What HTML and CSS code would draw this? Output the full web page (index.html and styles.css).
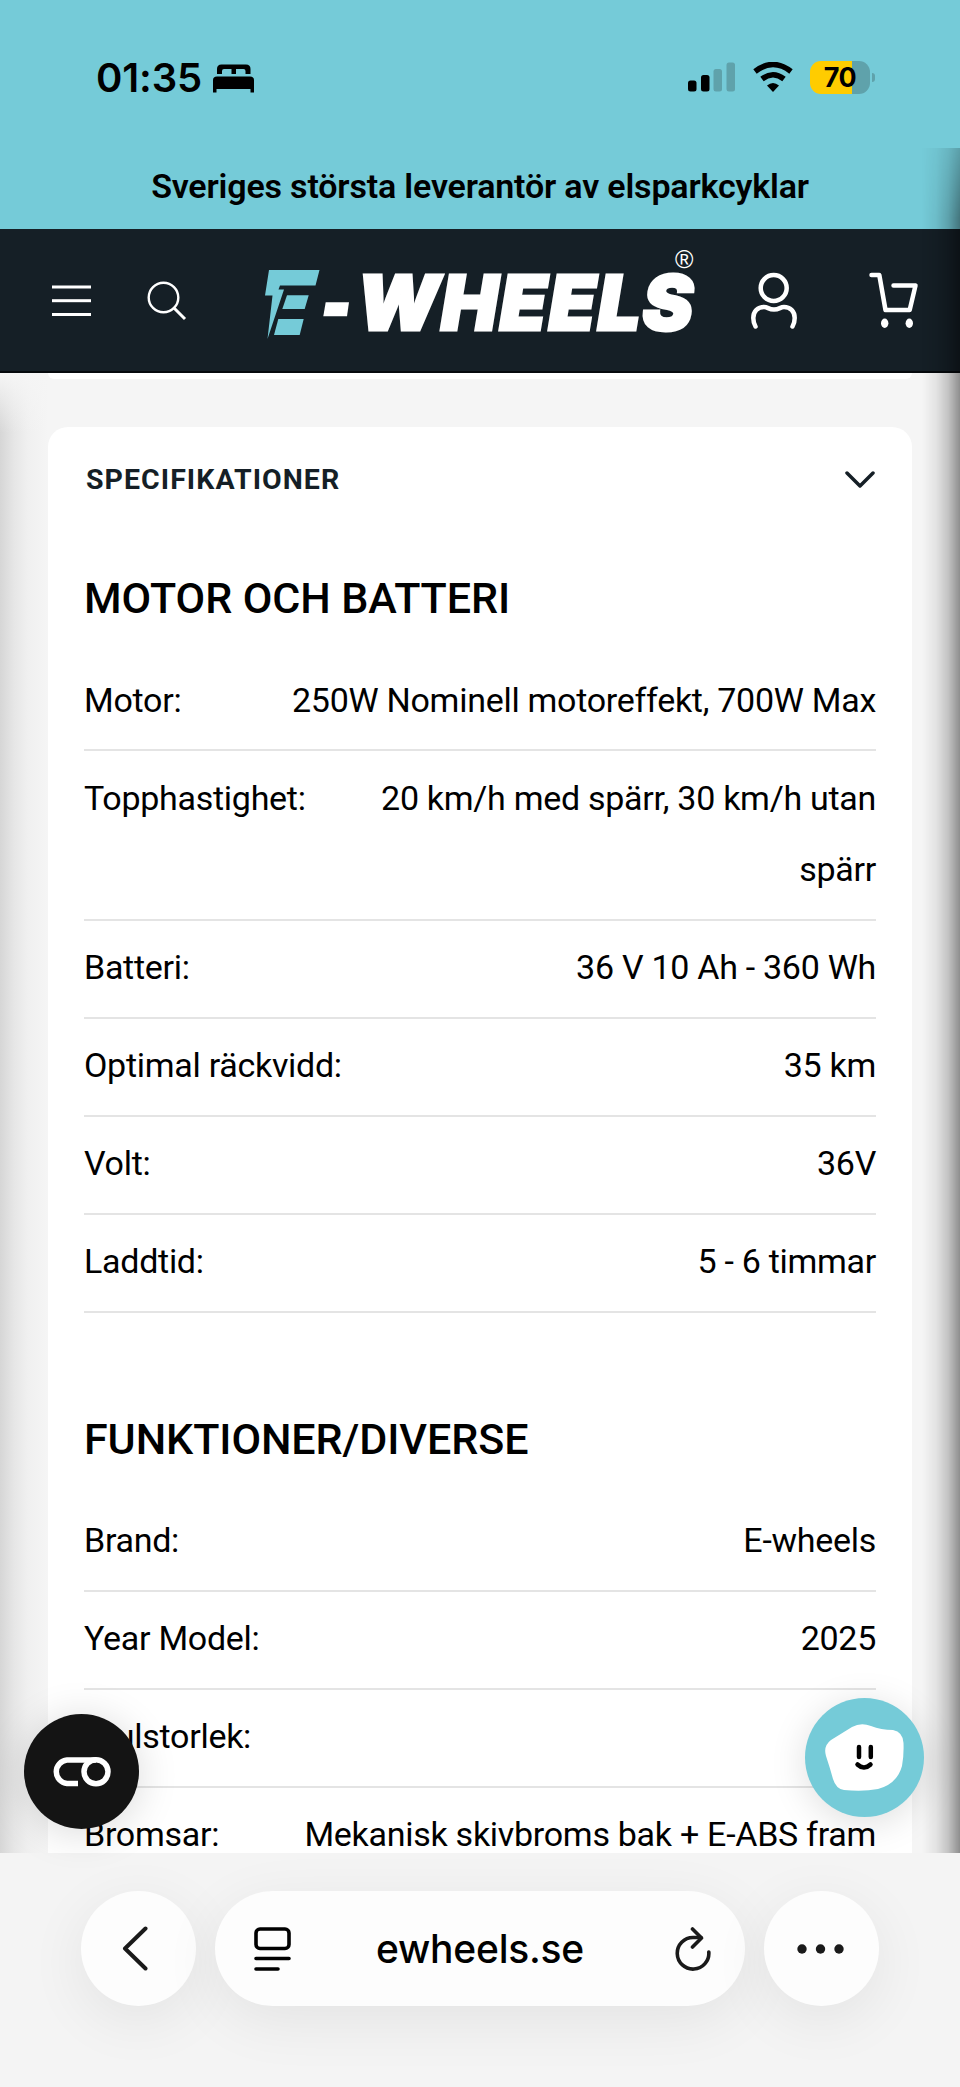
FILE: index.html
```
<!DOCTYPE html>
<html lang="sv">
<head>
    <meta charset="UTF-8">
    <meta name="viewport" content="width=device-width, initial-scale=1.0">
    <title>E-Wheels</title>
    <link rel="stylesheet" href="styles.css">
</head>
<body>
    <div class="status-bar">
        <div class="status-left">
            <span class="clock">01:35</span>
            <svg class="bed" width="42" height="29" viewBox="0 0 42 29">
                <path d="M4 10V5Q4 0.500 8.500 0.500H33Q37.500 0.500 37.500 5V10H32.500V7Q32.500 5 30.500 5H23V10H18.500V5H11Q9 5 9 7V10Z"/>
                <path d="M0 28.500V16Q0 12.500 4 12.500H37Q41 12.500 41 16V28.500H37.500V25H3.500V28.500Z"/>
            </svg>
        </div>
        <div class="status-right">
            <svg class="signal" width="47" height="30" viewBox="0 0 47 30">
                <rect x="0" y="18.500" width="8.500" height="11" rx="2.500"/>
                <rect x="13" y="13" width="8.500" height="16.500" rx="2.500"/>
                <rect x="25.500" y="7" width="8.500" height="22.500" rx="2.500" fill="#5fa2ab"/>
                <rect x="38.500" y="0.500" width="8.500" height="29" rx="2.500" fill="#5fa2ab"/>
            </svg>
            <svg class="wifi" width="40" height="31" viewBox="0 0 40 31">
                <path d="M2 9.500Q20 -4.500 38 9.500" fill="none" stroke="#000" stroke-width="5.500"/>
                <path d="M9 17Q20 8.500 31 17" fill="none" stroke="#000" stroke-width="5.500"/>
                <path d="M14 23.500Q20 18.500 26 23.500L20 30Z"/>
            </svg>
            <div class="battery"><span>70</span></div>
            <div class="battery-tip"></div>
        </div>
    </div>

    <div class="banner">Sveriges största leverantör av elsparkcyklar</div>

    <header class="header">
        <svg class="menu-icon" width="39" height="32" viewBox="0 0 39 32" fill="#fff">
            <rect y="0.500" width="39" height="3"/>
            <rect y="14.200" width="39" height="3"/>
            <rect y="28" width="39" height="3"/>
        </svg>
        <svg class="search-icon" width="40" height="40" viewBox="0 0 40 40" fill="none" stroke="#fff" stroke-width="2.400">
            <circle cx="16.500" cy="16.500" r="14.800"/>
            <path d="M27 27L38 38" stroke-width="3"/>
        </svg>
        <svg class="logo" width="434" height="94" viewBox="0 0 434 94">
            <g fill="#75cbd8">
                <path d="M3 20H53.500L49.500 35.500H14L12.500 39.500H18L1.500 89L6.500 45.500H-1Z"/>
                <path d="M21 45.300H42.700L38.700 59H16.300Z"/>
                <path d="M12.300 69H37.700L33.700 85H8Z"/>
            </g>
            <path d="M59.700 52.300H83L81 66.300H57.300Z" fill="#fff"/>
            <text class="logo-text" x="91" y="79.500" textLength="338" lengthAdjust="spacingAndGlyphs">WHEELS</text>
            <text class="logo-reg" x="409" y="18">®</text>
        </svg>
        <svg class="user-icon" width="48" height="58" viewBox="0 0 48 58" fill="none" stroke="#fff" stroke-width="4.500" stroke-linecap="round">
            <circle cx="23.700" cy="16" r="13"/>
            <path d="M5.500 54.500C3.500 51 3.300 49 3.300 46C3.300 39 8 35 14 35C18 35 18.500 37.500 24 37.500C29.500 37.500 30 35 34 35C40 35 44.700 39 44.700 46C44.700 49 44.500 51 42.500 54.500"/>
        </svg>
        <svg class="cart-icon" width="50" height="56" viewBox="0 0 50 56">
            <path d="M2.500 3H10.300L16.500 38H40.700L46.500 13.500H24.500" fill="none" stroke="#fff" stroke-width="4.500" stroke-linecap="round" stroke-linejoin="round"/>
            <ellipse cx="15.700" cy="51.200" rx="3.700" ry="4.700" fill="#fff"/>
            <ellipse cx="40.300" cy="51.200" rx="3.700" ry="4.700" fill="#fff"/>
        </svg>
    </header>

    <main class="page">
        <div class="card-prev"></div>
        <section class="card">
            <div class="card-header">
                <h2>SPECIFIKATIONER</h2>
                <svg class="chevron" width="30" height="18" viewBox="0 0 30 18" fill="none" stroke="#151f26" stroke-width="3.500" stroke-linecap="round" stroke-linejoin="round">
                    <path d="M2 2L15 15L28 2"/>
                </svg>
            </div>

            <h3>MOTOR OCH BATTERI</h3>
            <dl class="specs">
                <div class="row"><dt>Motor:</dt><dd>250W Nominell motoreffekt, 700W Max</dd></div>
                <div class="row"><dt>Topphastighet:</dt><dd>20 km/h med spärr, 30 km/h utan<br>spärr</dd></div>
                <div class="row"><dt>Batteri:</dt><dd>36 V 10 Ah - 360 Wh</dd></div>
                <div class="row"><dt>Optimal räckvidd:</dt><dd>35 km</dd></div>
                <div class="row"><dt>Volt:</dt><dd>36V</dd></div>
                <div class="row"><dt>Laddtid:</dt><dd>5 - 6 timmar</dd></div>
            </dl>

            <h3>FUNKTIONER/DIVERSE</h3>
            <dl class="specs">
                <div class="row"><dt>Brand:</dt><dd>E-wheels</dd></div>
                <div class="row"><dt>Year Model:</dt><dd>2025</dd></div>
                <div class="row"><dt>Hjulstorlek:</dt><dd></dd></div>
                <div class="row"><dt>Bromsar:</dt><dd>Mekanisk skivbroms bak + E-ABS fram</dd></div>
            </dl>
        </section>
    </main>

    <nav class="browser-bar">
        <div class="round-btn">
            <svg class="back-icon" width="26" height="45" viewBox="0 0 26 45" fill="none" stroke="#1a1a1a" stroke-width="4" stroke-linecap="round" stroke-linejoin="round">
                <path d="M23.500 2.500L3 22.500L23.500 42.500"/>
            </svg>
        </div>
        <div class="address">
            <svg width="37" height="44" viewBox="0 0 37 44" fill="none" stroke="#000" stroke-width="3.600" stroke-linecap="round">
                <rect x="2" y="2" width="33" height="19.500" rx="4"/>
                <path d="M2 31.500H35M2 42H24"/>
            </svg>
            <span class="url">ewheels.se</span>
            <svg width="36" height="44" viewBox="0 0 36 44" fill="none" stroke="#1a1a1a" stroke-width="3.600" stroke-linecap="round" stroke-linejoin="round">
                <path d="M26 10.500H18A15.800 15.800 0 1 0 33.800 25"/>
                <path d="M17.500 2L26.500 11L17.500 20"/>
            </svg>
        </div>
        <div class="round-btn">
            <svg class="dots" width="48" height="10" viewBox="0 0 48 10" fill="#1a1a1a">
                <circle cx="5" cy="5" r="4.700"/>
                <circle cx="23.500" cy="5" r="4.700"/>
                <circle cx="42" cy="5" r="4.700"/>
            </svg>
        </div>
    </nav>

    <div class="edge-shadow"></div>

    <!-- floating widgets -->
    <div class="consent-btn">
        <svg width="60" height="30" viewBox="0 0 60 30" fill="none" stroke="#fff" stroke-width="5.500">
            <path d="M26 26.500H15A11.800 11.800 0 0 1 15 3H44"/>
            <circle cx="44" cy="14.800" r="12"/>
        </svg>
    </div>
    <div class="chat-btn">
        <svg width="119" height="119" viewBox="0 0 119 119">
            <path d="M47 29Q56 24 66 28Q76 32 88 32Q98 34 98.500 45Q99 58 97 68Q92 86 73 91Q58 94 39 92Q31 91 28 81Q25 70 21 58Q18 48 26 42Z" fill="#fff"/>
            <path d="M54 49V59M65.800 49V59" stroke="#000" stroke-width="4.500" stroke-linecap="round"/>
            <path d="M52.500 66.500Q59 72.500 65.500 66.500" fill="none" stroke="#000" stroke-width="4.500" stroke-linecap="round"/>
        </svg>
    </div>
</body>
</html>
```
FILE: styles.css
```
* {
    box-sizing: border-box;
}
body {
    margin: 0;
    position: relative;
    width: 960px;
    height: 2087px;
    overflow: hidden;
    display: flex;
    flex-direction: column;
    font-family: Roboto, "Liberation Sans", sans-serif;
    color: #000;
    background-color: #f5f5f5;
}
svg {
    display: block;
    flex-shrink: 0;
}

.status-bar {
    flex: none;
    height: 148px;
    padding: 0 85px 0 96px;
    display: flex;
    align-items: flex-start;
    justify-content: space-between;
    background-color: #75cbd8;
    font-family: Inter, sans-serif;
}
.status-left, .status-right {
    display: flex;
}
.clock {
    width: 117px;
    margin-top: 54px;
    line-height: 48px;
    font-size: 40px;
    font-weight: 600;
    letter-spacing: -0.100px;
}
.bed {
    margin-top: 64px;
}
.signal {
    margin: 62px 18px 0 0;
}
.wifi {
    margin: 62px 17px 0 0;
}
.battery {
    width: 60px;
    height: 33px;
    margin-top: 61px;
    border-radius: 11px;
    background: linear-gradient(to right, #ffcc00 42px, #5fa2ab 42px);
    text-align: center;
    font-size: 27px;
    font-weight: 700;
    line-height: 33px;
    letter-spacing: -0.500px;
}
.battery-tip {
    width: 3px;
    height: 9px;
    margin: 73px 0 0 2px;
    border-radius: 0 4px 4px 0;
    background-color: #5fa2ab;
}

.banner {
    flex: none;
    height: 81px;
    background-color: #75cbd8;
    text-align: center;
    font-size: 34px;
    font-weight: 600;
    letter-spacing: -0.170px;
    line-height: 77px;
}

.header {
    flex: none;
    height: 144px;
    padding: 0 42px 0 52px;
    display: flex;
    align-items: flex-start;
    background-color: #151f26;
    border-bottom: 2px solid #05090c;
}
.menu-icon {
    margin: 56px 56px 0 0;
}
.search-icon {
    margin: 52px 79px 0 0;
}
.logo {
    margin: 21px 50px 0 0;
    overflow: visible;
}
.logo-text {
    font-family: Inter, sans-serif;
    font-size: 75px;
    font-weight: 900;
    font-style: italic;
    letter-spacing: 2px;
    fill: #fff;
    stroke: #fff;
    stroke-width: 3px;
}
.logo-reg {
    font-family: "Liberation Sans", sans-serif;
    font-size: 25px;
    fill: #fff;
}
.user-icon {
    margin: 43px 71px 0 0;
}
.cart-icon {
    margin-top: 43px;
}

.page {
    flex: none;
    height: 1480px;
    padding: 0 48px;
    overflow: hidden;
    background:
        linear-gradient(to bottom, #f5f5f5, rgba(245,245,245,0) 60px),
        linear-gradient(to right, #d6d6d6, #e6e6e6 14px, #f0f0f0 28px, #f5f5f5 48px);
}
.card-prev {
    height: 6px;
    border-radius: 0 0 20px 20px;
    background-color: #fff;
}
.card {
    height: 1500px;
    margin-top: 48px;
    padding: 0 36px;
    border-radius: 20px 20px 0 0;
    background-color: #fff;
}
.card-header {
    height: 105px;
    padding: 0 1px 0 2px;
    display: flex;
    align-items: center;
    justify-content: space-between;
}
.card-header h2 {
    margin: 0;
    color: #151f26;
    font-size: 28.500px;
    font-weight: 700;
    letter-spacing: 1.050px;
}
.chevron {
    margin-top: 1px;
}
h3 {
    margin: 0;
    height: 121px;
    padding-top: 40px;
    font-size: 43px;
    font-weight: 500;
    letter-spacing: -0.080px;
    line-height: 52px;
}
.specs {
    margin: 0 0 60px;
}
.row {
    display: flex;
    justify-content: space-between;
    padding: 11.500px 0 13px;
    border-bottom: 2px solid #e4e4e4;
    font-size: 34px;
    letter-spacing: -0.280px;
    line-height: 71.500px;
}
.row dt, .row dd {
    margin: 0;
    white-space: nowrap;
}
.row dd {
    text-align: right;
}

.browser-bar {
    flex: none;
    height: 234px;
    padding: 38px 81px 0;
    display: flex;
    gap: 19px;
    overflow: hidden;
    background-color: #f4f4f4;
}
.round-btn, .address {
    height: 115px;
    border-radius: 58px;
    display: flex;
    align-items: center;
    background-color: #fdfdfd;
    box-shadow: 0 14px 60px rgba(0,0,0,0.07);
}
.round-btn {
    width: 115px;
    justify-content: center;
}
.back-icon {
    margin-right: 8px;
}
.dots {
    margin-right: 1px;
}
.address {
    flex: 1;
    padding: 0 34px 0 39px;
    justify-content: space-between;
    font-family: Inter, sans-serif;
    font-size: 39px;
    font-weight: 500;
}
.url {
    margin-right: 6px;
    letter-spacing: -0.250px;
}

/* shadow of the off-canvas drawer along the right edge */
.edge-shadow {
    position: absolute;
    top: 148px;
    right: 0;
    width: 38px;
    height: 1705px;
    background: linear-gradient(to right, rgba(0,0,0,0), rgba(0,0,0,0.07) 14px, rgba(0,0,0,0.2) 26px, rgba(0,0,0,0.42));
    -webkit-mask-image: linear-gradient(to bottom, rgba(0,0,0,0.5), #000 70px);
    mask-image: linear-gradient(to bottom, rgba(0,0,0,0.5), #000 70px);
}
.consent-btn {
    position: absolute;
    left: 24px;
    top: 1714px;
    width: 115px;
    height: 115px;
    border-radius: 50%;
    display: flex;
    align-items: center;
    justify-content: center;
    background-color: #141414;
    box-shadow: 0 4px 40px rgba(0,0,0,0.15);
}
.chat-btn {
    position: absolute;
    left: 805px;
    top: 1698px;
    width: 119px;
    height: 119px;
    border-radius: 50%;
    background-color: #75cbd8;
    box-shadow: 0 6px 36px rgba(0,0,0,0.13);
}
```
